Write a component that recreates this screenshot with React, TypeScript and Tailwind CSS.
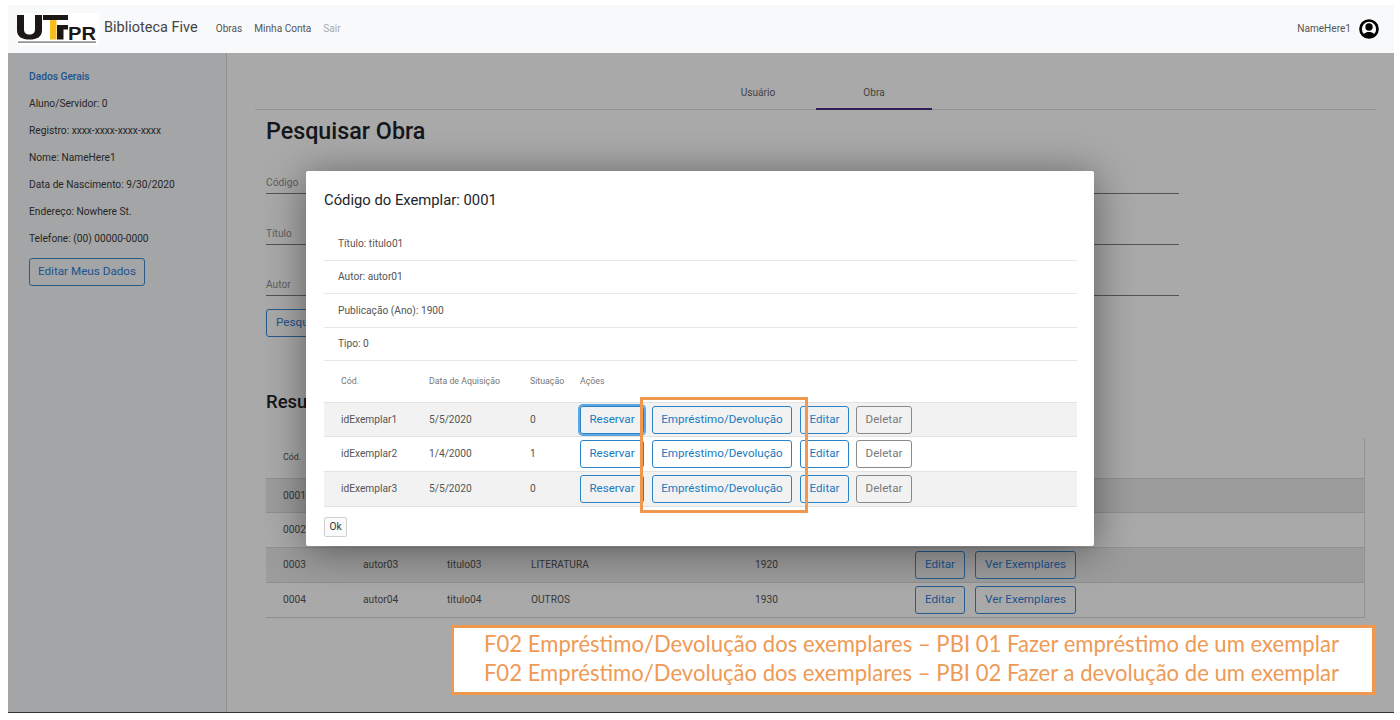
import React from 'react';

// the first two rows are covered by the modal, only the code shows beside it
const mainRows = [
    { cod: '0001', covered: true, autor: '', titulo: '', tipo: '', ano: '' },
    { cod: '0002', covered: true, autor: '', titulo: '', tipo: '', ano: '' },
    { cod: '0003', covered: false, autor: 'autor03', titulo: 'titulo03', tipo: 'LITERATURA', ano: '1920' },
    { cod: '0004', covered: false, autor: 'autor04', titulo: 'titulo04', tipo: 'OUTROS', ano: '1930' },
];

const exemplares = [
    { cod: 'idExemplar1', data: '5/5/2020', situacao: '0', focus: true },
    { cod: 'idExemplar2', data: '1/4/2000', situacao: '1', focus: false },
    { cod: 'idExemplar3', data: '5/5/2020', situacao: '0', focus: false },
];

const detalhes = [
    { text: 'Título: titulo01', height: 'h-[34px]' },
    { text: 'Autor: autor01', height: 'h-[33px]' },
    { text: 'Publicação (Ano): 1900', height: 'h-[34px]' },
    { text: 'Tipo: 0', height: 'h-[33px]' },
];

const dados = [
    'Aluno/Servidor: 0',
    'Registro: xxxx-xxxx-xxxx-xxxx',
    'Nome: NameHere1',
    'Data de Nascimento: 9/30/2020',
    'Endereço: Nowhere St.',
    'Telefone: (00) 00000-0000',
];

const Logo = () => (
    <svg width="82" height="32" viewBox="0 0 82 32" className="shrink-0">
        <rect width="82" height="32" fill="#ffffff" />
        {/* U */}
        <path d="M0 2h7v14c0 4 2 5.500 5.500 5.500S18 20 18 16V2h7v15c0 7-5 9.500-12.500 9.500S0 24 0 17z" fill="#1c1714" />
        {/* T + F */}
        <rect x="26" y="2" width="25" height="5" fill="#1c1714" />
        <rect x="33" y="7" width="6.500" height="19.500" fill="#f7bd1c" />
        <rect x="40" y="12" width="11" height="4.500" fill="#1c1714" />
        <rect x="40" y="12" width="6.500" height="14.500" fill="#1c1714" />
        <text x="51" y="26.500" fontFamily="'Liberation Sans', sans-serif" fontWeight="700" fontSize="18" fill="#1c1714" textLength="28" lengthAdjust="spacingAndGlyphs">PR</text>
        <rect x="1" y="28.500" width="78" height="1.200" fill="#666666" />
    </svg>
);

const UserIcon = () => (
    <svg width="20" height="20" viewBox="0 0 20 20" className="ml-[8px] shrink-0">
        <circle cx="10" cy="10" r="8.500" fill="#ffffff" stroke="#000000" strokeWidth="2.700" />
        <circle cx="10" cy="8" r="3.700" fill="#000000" />
        <path d="M4.500 15.500c1.500-2 3.500-2.500 5.500-2.500s4 .5 5.500 2.500L10 19z" fill="#000000" />
    </svg>
);

const Field = ({ label, className }: { label: string; className: string }) => (
    <div className={`${className} w-[913px] border-b border-[#7d7d7d] text-[10.2px] text-[#8f8f8f] pb-[3px] leading-[14px]`}>{label}</div>
);

export default function App() {
    return (
        <div className="relative w-[1400px] h-[720px] bg-white overflow-hidden pt-[5px] pl-2 font-['Roboto',sans-serif] text-[#212529]">
            <div className="w-[1386px] h-[708px] flex flex-col border-b border-[#333]">
                {/* Navbar */}
                <header className="h-[48px] shrink-0 bg-[#f8f9fa] flex items-center pl-[9px] pr-[15px]">
                    <Logo />
                    <span className="ml-[5px] text-[14.5px] text-[#444] mb-[3px]">Biblioteca Five</span>
                    <nav className="flex items-center gap-3 ml-[18px] text-[10.1px] text-[#555]">
                        <span>Obras</span>
                        <span>Minha Conta</span>
                        <span className="text-[#aaa]">Sair</span>
                    </nav>
                    <span className="ml-auto text-[10.1px] text-[#555]">NameHere1</span>
                    <UserIcon />
                </header>

                <div className="relative flex-1 flex min-h-0">
                    {/* Sidebar */}
                    <aside className="w-[219px] shrink-0 border-r border-[#dcdcdc] bg-[#f8f9fa] pl-[21px] pt-[17px]">
                        <div className="text-[10.2px] font-medium leading-[13px] text-[#2f80d8]">Dados Gerais</div>
                        <div className="mt-[14px] flex flex-col gap-[14px] text-[10.2px] leading-[13px] text-[#3a3a3a]">
                            {dados.map((d) => (
                                <div key={d}>{d}</div>
                            ))}
                        </div>
                        <button className="mt-[13px] h-[28px] w-[116px] rounded-[3px] border border-[#3a8ad6] text-[11.7px] text-[#2f80d8]">Editar Meus Dados</button>
                    </aside>

                    {/* Main */}
                    <main className="flex-1 min-w-0 pl-[28px] pr-[18px]">
                        <div className="h-[57px] flex border-b border-[#dedede] pt-[32px] text-[10.1px] text-[#666]">
                            <div className="w-[116px] ml-[445px] text-center">Usuário</div>
                            <div className="w-[116px] text-center relative">
                                Obra
                                <div className="absolute left-0 right-0 top-[23px] h-[2px] bg-[#4b2e83]" />
                            </div>
                        </div>
                        <div className="px-[11px]">
                            <h1 className="mt-[5px] text-[23.3px] leading-[32px] font-medium text-[#212529]">Pesquisar Obra</h1>
                            <Field label="Código" className="mt-[29px]" />
                            <Field label="Título" className="mt-[33px]" />
                            <Field label="Autor" className="mt-[33px]" />
                            <button className="mt-[13px] h-[28px] w-[70px] rounded-[3px] border border-[#3a8ad6] text-[11.7px] text-[#2f80d8] text-left pl-[9px]">Pesquisar</button>
                            <h2 className="mt-[52px] text-[18.5px] leading-[26px] font-medium text-[#212529]">Resultados</h2>
                            <div className="mt-[23px] text-[#555] border-r border-[#dcdcdc]">
                                <div className="h-[40px] flex items-center pl-[17px] text-[8.800px]">
                                    <span className="w-[80px]">Cód.</span>
                                </div>
                                {mainRows.map((r, i) => (
                                    <div key={r.cod} className={`h-[35px] flex items-center pl-[17px] border-b border-[#d8d8d8] text-[10.2px] ${i === 0 ? 'border-t' : ''} ${i % 2 === 0 ? 'bg-[#ebebeb]' : 'bg-white'}`}>
                                        <span className="w-[80px]">{r.cod}</span>
                                        {!r.covered && (
                                            <>
                                                <span className="w-[84px]">{r.autor}</span>
                                                <span className="w-[84px]">{r.titulo}</span>
                                                <span className="w-[224px]">{r.tipo}</span>
                                                <span className="w-[160px]">{r.ano}</span>
                                                <button className="h-[28px] w-[50px] rounded-[3px] border border-[#3a8ad6] text-[11.7px] text-[#2f80d8]">Editar</button>
                                                <button className="ml-[10px] h-[28px] w-[101px] rounded-[3px] border border-[#3a8ad6] text-[11.7px] text-[#2f80d8]">Ver Exemplares</button>
                                            </>
                                        )}
                                    </div>
                                ))}
                            </div>
                        </div>
                    </main>

                    {/* Backdrop */}
                    <div className="absolute inset-0 bg-black/[.337]" />
                </div>
            </div>

            {/* Modal */}
            <div className="absolute left-[306px] top-[171px] w-[788px] h-[375px] bg-white rounded-[2px] shadow-[0_4px_40px_rgba(0,0,0,0.45)] pl-[18px] pr-[17px]">
                <div className="h-[56px] flex items-center pt-[2px] text-[14.8px] text-[#212529]">Código do Exemplar: 0001</div>
                {detalhes.map((d) => (
                    <div key={d.text} className={`${d.height} flex items-center pl-[14px] border-b border-[#e8e8e8] text-[10.2px] text-[#555]`}>{d.text}</div>
                ))}
                <div className="h-[41px] flex items-center pl-[17px] text-[8.800px] text-[#777]">
                    <span className="w-[88px]">Cód.</span>
                    <span className="w-[101px]">Data de Aquisição</span>
                    <span className="w-[50px]">Situação</span>
                    <span>Ações</span>
                </div>
                {exemplares.map((e, i) => (
                    <div key={e.cod} className={`h-[35px] flex items-center pl-[17px] border-b border-[#e2e2e2] text-[10.2px] text-[#555] ${i === 0 ? 'border-t' : ''} ${i % 2 === 0 ? 'bg-[#f2f2f2]' : 'bg-white'}`}>
                        <span className="w-[88px]">{e.cod}</span>
                        <span className="w-[101px]">{e.data}</span>
                        <span className="w-[50px]">{e.situacao}</span>
                        <button className={`h-[28px] w-[64px] rounded-[3px] border border-[#2b83c5] text-[11.6px] text-[#1a7ac0] ${e.focus ? 'ring-2 ring-[#5aa7e6]' : ''}`}>Reservar</button>
                        <button className="ml-[8px] h-[28px] w-[140px] rounded-[3px] border border-[#2b83c5] text-[11.6px] text-[#1a7ac0]">Empréstimo/Devolução</button>
                        <button className="ml-[8px] h-[28px] w-[49px] rounded-[3px] border border-[#2b83c5] text-[11.6px] text-[#1a7ac0]">Editar</button>
                        <button className="ml-[7px] h-[28px] w-[56px] rounded-[3px] border border-[#8a8a8a] text-[11.6px] text-[#7a7a7a]">Deletar</button>
                    </div>
                ))}
                <button className="mt-[10px] h-[20px] w-[23px] rounded-[2px] border border-[#cfcfcf] bg-[#fafafa] text-[10.2px] text-[#333]">Ok</button>
            </div>

            {/* Annotation over the modal buttons */}
            <div className="absolute left-[640px] top-[397px] w-[168px] h-[116px] border-[3px] border-[#f0984e]" />

            {/* Annotation caption */}
            <div className="absolute left-[451px] top-[625px] w-[924px] h-[70px] bg-white border-[3px] border-[#f0984e] flex flex-col items-center justify-center pb-[4px] pr-[3px] font-['Lato',sans-serif] text-[22.1px] leading-[29px] text-[#ef9a55]">
                <div>F02 Empréstimo/Devolução dos exemplares – PBI 01 Fazer empréstimo de um exemplar</div>
                <div>F02 Empréstimo/Devolução dos exemplares – PBI 02 Fazer a devolução de um exemplar</div>
            </div>
        </div>
    );
}
